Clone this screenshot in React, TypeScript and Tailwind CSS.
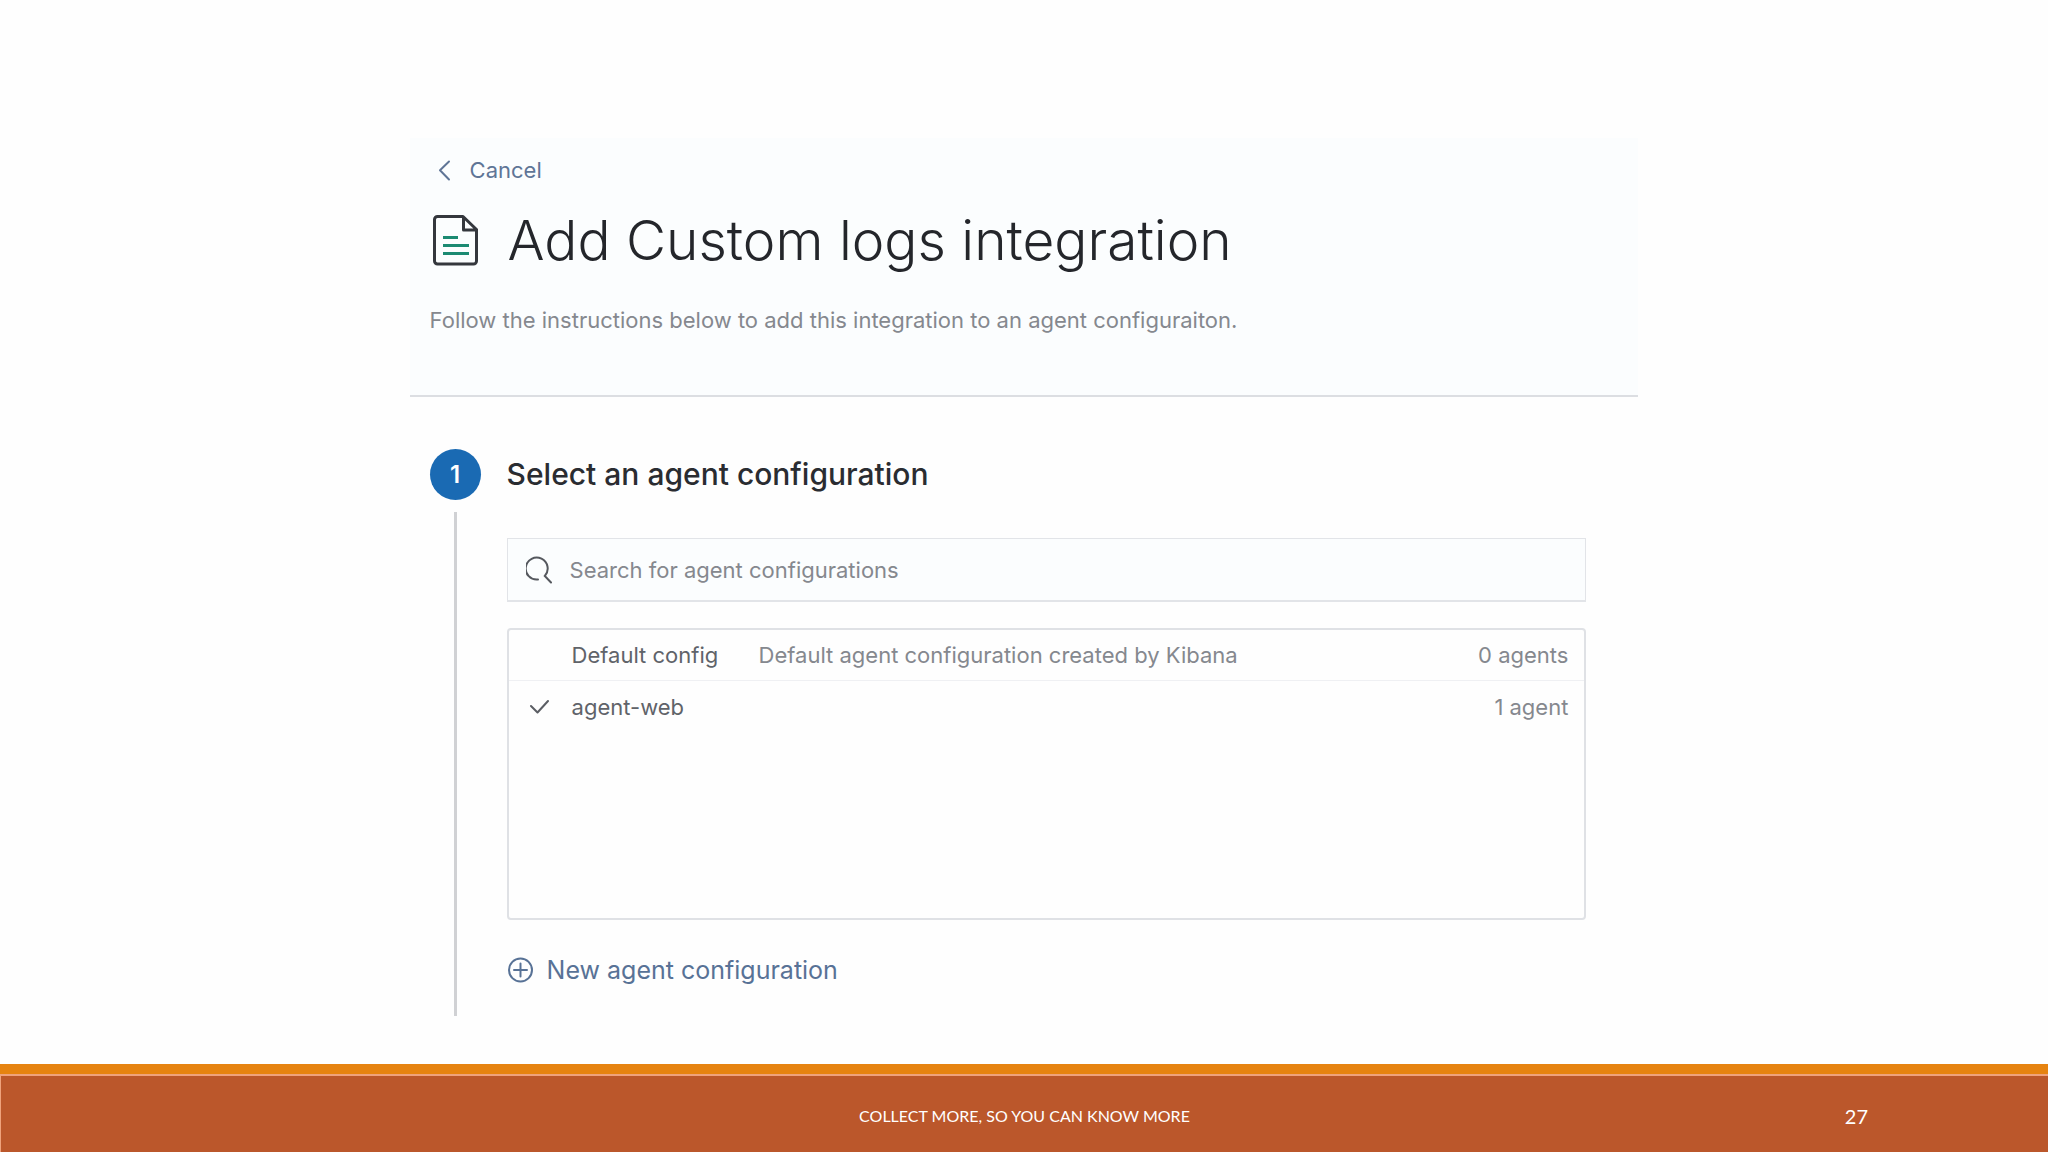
import { useState } from "react";

type AgentConfig = {
  id: string;
  name: string;
  description: string;
  agents: number;
};

const configs: AgentConfig[] = [
  {
    id: "default",
    name: "Default config",
    description: "Default agent configuration created by Kibana",
    agents: 0,
  },
  { id: "agent-web", name: "agent-web", description: "", agents: 1 },
];

function ChevronLeftIcon() {
  return (
    <svg className="h-6 w-6" viewBox="0 0 24 24" fill="none" stroke="currentColor" strokeWidth="2">
      <path d="m17 3.500-9 8.700 9 9.300" strokeLinecap="round" strokeLinejoin="round" />
    </svg>
  );
}

function LogsIcon() {
  return (
    <svg className="h-13 w-12 shrink-0" viewBox="0 0 48 52" fill="none" strokeWidth="3">
      <path
        d="M33 2.500H7.500a3 3 0 0 0-3 3V47a3 3 0 0 0 3 3h36a3 3 0 0 0 3-3V15.500L33 2.500Zm.5 1v12.500h12.500"
        stroke="#34373d"
        strokeLinejoin="round"
      />
      <path d="M13 23.500h15M13 31.500h26M13 39.500h26" stroke="#1b8a72" />
    </svg>
  );
}

function SearchIcon() {
  return (
    <svg className="h-7 w-7 shrink-0" viewBox="0 0 28 28" fill="none" stroke="#55585e" strokeWidth="2">
      <path d="M12 23.500A11 11 0 1 1 18.800 20L25 26.500" strokeLinecap="round" />
    </svg>
  );
}

function CheckIcon() {
  return (
    <svg className="h-5 w-5" viewBox="0 0 20 20" fill="none" stroke="#5b5e64" strokeWidth="2">
      <path d="m2 9 6.500 6.500L19 4" strokeLinecap="round" strokeLinejoin="round" />
    </svg>
  );
}

function PlusCircleIcon() {
  return (
    <svg className="h-[26px] w-[26px]" viewBox="0 0 26 26" fill="none" stroke="currentColor" strokeWidth="2">
      <circle cx="13.500" cy="13" r="11.500" />
      <path d="M13.500 6.500v13M7 13h13" strokeLinecap="round" />
    </svg>
  );
}

export default function App() {
  const [query, setQuery] = useState("");
  const [selected, setSelected] = useState("agent-web");

  const visible = configs.filter((c) =>
    c.name.toLowerCase().includes(query.toLowerCase())
  );

  return (
    <div className="flex min-h-screen flex-col bg-[#fefefe] font-['Inter',sans-serif]">
      <main className="mx-auto w-3/5 grow pt-[138px]">
        <header className="border-b-2 border-[#dcdee2] bg-[#fbfdfe] px-5 pt-4 pb-[59px]">
          <button
            type="button"
            className="flex items-center gap-[14px] pl-[2px] text-[22px] leading-8 text-[#5f7596]"
          >
            <ChevronLeftIcon />
            Cancel
          </button>
          <div className="mt-[22px] flex items-center gap-[30px]">
            <LogsIcon />
            <h1 className="text-[55px] leading-16 font-light text-[#24262b]">
              Add Custom logs integration
            </h1>
          </div>
          <p className="mt-8 text-[22px] leading-8 text-[#85888e]">
            Follow the instructions below to add this integration to an agent configuraiton.
          </p>
        </header>

        <section className="mt-[52px] flex gap-[26px] pr-[52px] pl-5">
          <div className="flex flex-col items-center">
            <span className="flex h-[51px] w-[51px] items-center justify-center rounded-full bg-[#1a6ab3] text-2xl font-semibold text-white">
              1
            </span>
            <div className="mt-3 w-[3px] grow bg-[#d0d1d4]" />
          </div>

          <div className="grow pb-7">
            <h2 className="text-[30px] leading-[51px] font-medium text-[#2a2c31]">
              Select an agent configuration
            </h2>

            <label className="mt-[38px] flex h-16 items-center gap-4 border border-b-2 border-[#e2e4e8] bg-[#fbfdfe] px-[18px]">
              <SearchIcon />
              <input
                type="text"
                aria-label="Search for agent configurations"
                placeholder="Search for agent configurations"
                value={query}
                onChange={(e) => setQuery(e.target.value)}
                className="h-full grow text-[22px] text-[#55585e] outline-none placeholder:text-[#85888e]"
              />
            </label>

            <div className="mt-[26px] h-[292px] rounded border-2 border-[#dfe1e5]">
              <table className="w-full text-[22px] leading-8">
                <tbody>
                  {visible.map((c) => (
                    <tr
                      key={c.id}
                      onClick={() => setSelected(c.id)}
                      className="h-[50px] border-b border-[#eff0f3] last:h-[54px] last:border-b-0"
                    >
                      <td className="w-[63px] pl-5">{c.id === selected && <CheckIcon />}</td>
                      <td className="w-[187px] text-[#606369]">{c.name}</td>
                      <td className="text-[#85888e]">{c.description}</td>
                      <td className="pr-4 text-right text-[#85888e]">
                        {c.agents} {c.agents === 1 ? "agent" : "agents"}
                      </td>
                    </tr>
                  ))}
                </tbody>
              </table>
            </div>

            <button
              type="button"
              className="mt-8 flex items-center gap-[14px] text-[25px] leading-9 text-[#587296]"
            >
              <PlusCircleIcon />
              New agent configuration
            </button>
          </div>
        </section>
      </main>

      <footer className="mt-12 border-t-[10px] border-[#e68310] font-['Lato',sans-serif] text-white">
        <div className="grid h-[78px] grid-cols-[1fr_auto_1fr] items-center border-t-2 border-l border-[#efa27c] bg-[#bb572b] pt-1">
          <span className="col-start-2 text-base">COLLECT MORE, SO YOU CAN KNOW MORE</span>
          <span className="pr-[180px] text-right text-xl">27</span>
        </div>
      </footer>
    </div>
  );
}
